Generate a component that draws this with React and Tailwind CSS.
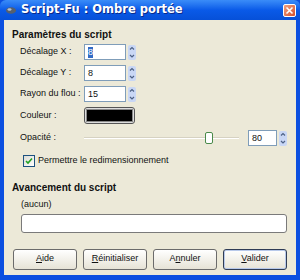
import React from "react";

function Spinner() {
  return (
    <div className="flex flex-col w-[8px] h-[15px] ml-[2px] bg-[#c9d7f5] rounded-[2px]">
      <svg width="8" height="7" viewBox="0 0 8 7" className="block">
        <path d="M2 4.5 L4 2.5 L6 4.5" stroke="#4d6185" strokeWidth="1.2" fill="none" />
      </svg>
      <svg width="8" height="8" viewBox="0 0 8 8" className="block">
        <path d="M2 3 L4 5 L6 3" stroke="#4d6185" strokeWidth="1.2" fill="none" />
      </svg>
    </div>
  );
}

function NumField({ value, w = "w-[42px]", selected }) {
  return (
    <div className="flex items-center">
      <div className={`${w} h-[16px] bg-white border border-[#7f9db9] flex items-center pl-[3px]`}>
        <span className={selected ? "bg-[#316ac5] text-white leading-[11px]" : "leading-[11px]"}>{value}</span>
      </div>
      <Spinner />
    </div>
  );
}

function Btn({ children, def }) {
  return (
    <div
      className={`w-[64px] h-[21px] rounded-[3px] border ${def ? "border-[#2f3c55]" : "border-[#6b6b6b]"} bg-gradient-to-b from-white to-[#e6e3d6] flex items-center justify-center ${def ? "shadow-[inset_0_0_0_1px_#b8c9ea]" : ""}`}
    >
      {children}
    </div>
  );
}

export default function App() {
  return (
    <div
      className="w-[300px] h-[280px] bg-[#0b4fe0] flex flex-col text-[9px] text-[#111]"
      style={{ fontFamily: '"Liberation Sans", Arial, sans-serif' }}
    >
      {/* title bar */}
      <div className="h-[20px] shrink-0 bg-gradient-to-b from-[#3a8cf8] via-[#0a5ae8] to-[#0650d8] flex items-center pl-[5px] pr-[4px] rounded-t-[6px]">
        <svg width="12" height="10" viewBox="0 0 12 10" className="mr-[4px]">
          <ellipse cx="6" cy="5.5" rx="5" ry="3.2" fill="#56606e" />
          <ellipse cx="4.5" cy="4.5" rx="2" ry="1.2" fill="#b7c0cc" />
        </svg>
        <span
          className="text-white font-bold text-[11.5px] [text-shadow:1px_1px_0_#0a2a8a]"
          style={{ fontFamily: '"DejaVu Sans", sans-serif' }}
        >
          Script-Fu : Ombre portée
        </span>
        <div className="ml-auto w-[13px] h-[13px] rounded-[2px] bg-gradient-to-br from-[#f0a080] to-[#d4502c] border border-white flex items-center justify-center">
          <svg width="9" height="9" viewBox="0 0 9 9">
            <path d="M1.5 1.5 L7.5 7.5 M7.5 1.5 L1.5 7.5" stroke="white" strokeWidth="1.6" />
          </svg>
        </div>
      </div>
      {/* body */}
      <div className="flex-1 mx-[4px] mb-[5px] bg-[#ece9d8] flex flex-col pl-[8px] pr-[9px] pt-[9px]">
        <div className="font-bold text-[10px] leading-[12px]">Paramètres du script</div>
        <div className="pl-[8px] mt-[3px] flex flex-col">
          <div className="flex items-center h-[16px] mt-[0px]">
            <span className="w-[64px]">Décalage X :</span>
            <NumField value="8" selected />
          </div>
          <div className="flex items-center h-[16px] mt-[5px]">
            <span className="w-[64px]">Décalage Y :</span>
            <NumField value="8" />
          </div>
          <div className="flex items-center h-[16px] mt-[5px]">
            <span className="w-[64px]">Rayon du flou :</span>
            <NumField value="15" />
          </div>
          <div className="flex items-center h-[17px] mt-[5px]">
            <span className="w-[64px]">Couleur :</span>
            <div className="w-[51px] h-[17px] rounded-[3px] border border-[#555] bg-[#ddd] p-[1px]">
              <div className="w-full h-full bg-black border border-[#888]"></div>
            </div>
          </div>
          <div className="flex items-center h-[16px] mt-[6px]">
            <span className="w-[64px]">Opacité :</span>
            <div className="relative w-[156px] h-[16px] flex items-center">
              <div className="w-full h-[2px] bg-[#d6d2c2] border-b border-white"></div>
              <div className="absolute left-[121px] top-[2px] w-[8px] h-[12px] rounded-[2px] bg-white border border-[#4a8a4a]"></div>
            </div>
            <div className="ml-[9px]">
              <NumField value="80" w="w-[29px]" />
            </div>
          </div>
          <div className="flex items-center mt-[8px] h-[13px]">
            <div className="w-[12px] h-[12px] ml-[3px] border border-[#1c5180] bg-gradient-to-br from-[#dcdcd4] to-white flex items-center justify-center">
              <svg width="8" height="8" viewBox="0 0 8 8">
                <path d="M1 4 L3 6 L7 1.5" stroke="#21a121" strokeWidth="1.6" fill="none" />
              </svg>
            </div>
            <span className="ml-[3px]">Permettre le redimensionnement</span>
          </div>
        </div>
        <div className="font-bold text-[10px] leading-[12px] mt-[15px]">Avancement du script</div>
        <div className="pl-[9px] mt-[4px]">(aucun)</div>
        <div className="ml-[9px] mt-[2px] h-[19px] bg-white border border-[#7a7a7a] rounded-[3px]"></div>
        <div className="flex mt-[16px] ml-[1px] gap-[6px]">
          <Btn><span><u>A</u>ide</span></Btn>
          <Btn><span><u>R</u>éinitialiser</span></Btn>
          <Btn><span>A<u>n</u>nuler</span></Btn>
          <Btn def><span><u>V</u>alider</span></Btn>
        </div>
      </div>
    </div>
  );
}
